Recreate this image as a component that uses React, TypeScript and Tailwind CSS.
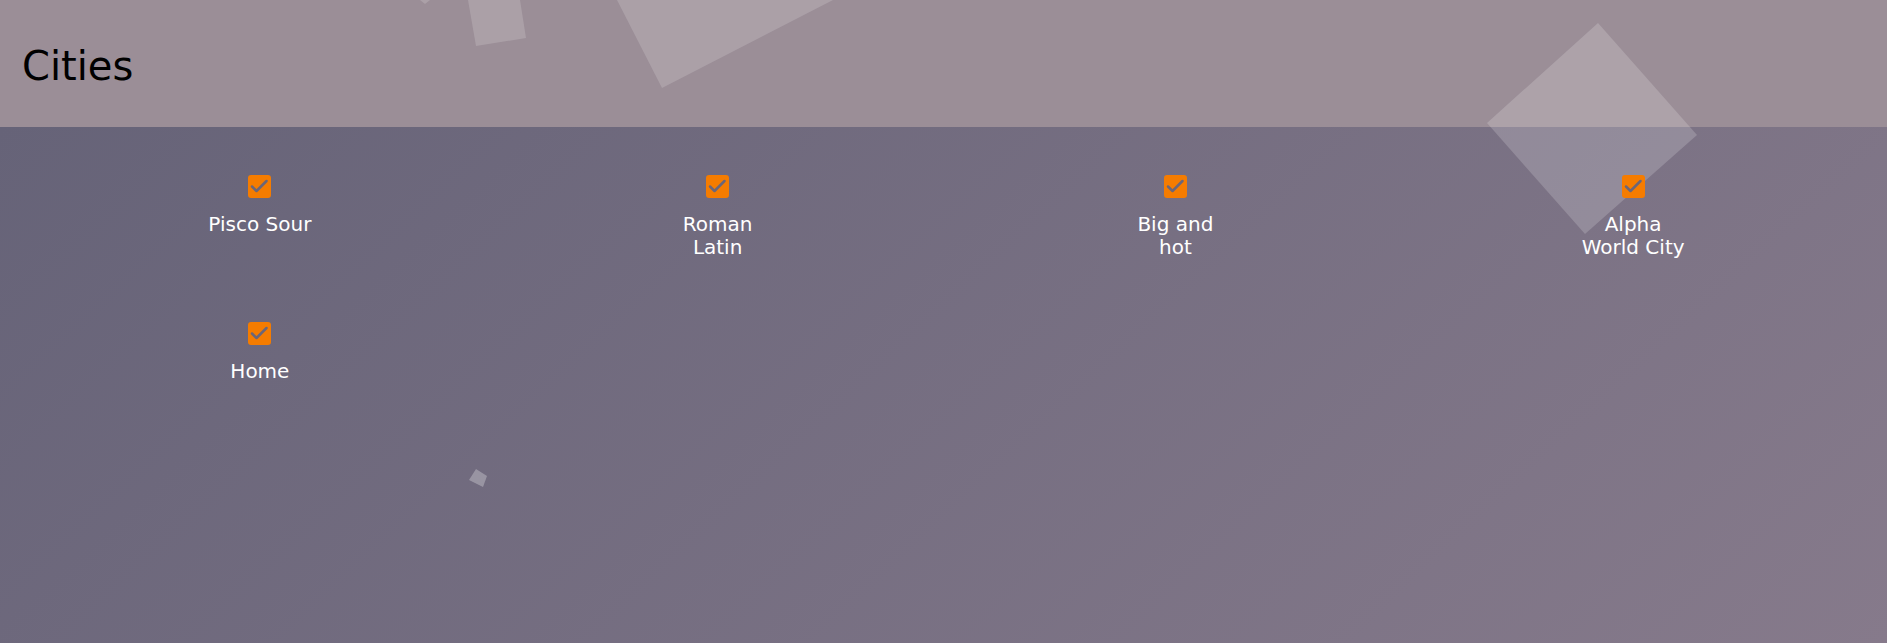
import React from "react";

const cities = ["Pisco Sour", "Roman Latin", "Big and hot", "Alpha World City", "Home"];

function CheckBox() {
  return (
    <span className="flex h-[23px] w-[23px] items-center justify-center rounded-[3px] bg-[#f57c00]">
      <svg viewBox="0 0 23 23" className="h-[23px] w-[23px]" fill="none">
        <polyline
          points="4,11.5 8.5,16 18.5,6"
          stroke="#6b6679"
          strokeWidth="2.5"
          strokeLinecap="round"
          strokeLinejoin="round"
        />
      </svg>
    </span>
  );
}

function CityItem({ name }: { name: string }) {
  return (
    <label className="flex flex-col items-center">
      <CheckBox />
      <span className="mt-[15px] max-w-[110px] text-center text-[20px] leading-[23px] text-white">
        {name}
      </span>
    </label>
  );
}

export default function App() {
  return (
    <div
      className="relative flex h-[643px] flex-col overflow-hidden"
      style={{ fontFamily: '"DejaVu Sans", Verdana, sans-serif' }}
    >
      <header className="h-[127px] shrink-0 bg-[#9b8e97]">
        <h1 className="relative z-10 pl-[22px] pt-[36px] text-[40px] leading-normal text-black">
          Cities
        </h1>
      </header>

      <main className="flex-1 bg-linear-[137deg] from-[#666378] to-[#867a8b]">
        <div className="relative z-10 grid grid-cols-4 gap-y-[63px] pl-[31px] pr-[25px] pt-[48px]">
          {cities.map((c) => (
            <CityItem key={c} name={c} />
          ))}
        </div>
      </main>

      {/* decorative shapes */}
      <svg className="pointer-events-none absolute inset-0 h-full w-full" viewBox="0 0 1887 643" fill="none">
        <polygon points="420,0 425,4 430,0" fill="white" fillOpacity="0.16" />
        <polygon points="468,0 520,0 526,38 476,46" fill="white" fillOpacity="0.16" />
        <polygon points="617,0 662,88 833,0" fill="white" fillOpacity="0.16" />
        <polygon points="1598,23 1697,135 1585,234 1487,123" fill="white" fillOpacity="0.18" />
        <polygon points="476,469 487,476 483,487 469,480" fill="white" fillOpacity="0.28" />
      </svg>
    </div>
  );
}
